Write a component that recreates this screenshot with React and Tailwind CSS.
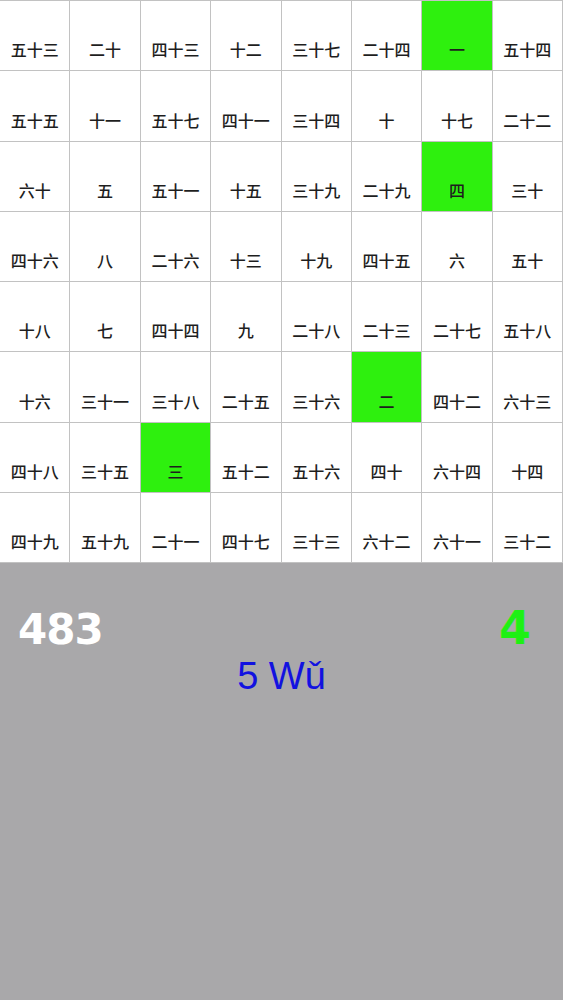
import React from 'react';

const rows = [
  ['五十三', '二十', '四十三', '十二', '三十七', '二十四', '一', '五十四'],
  ['五十五', '十一', '五十七', '四十一', '三十四', '十', '十七', '二十二'],
  ['六十', '五', '五十一', '十五', '三十九', '二十九', '四', '三十'],
  ['四十六', '八', '二十六', '十三', '十九', '四十五', '六', '五十'],
  ['十八', '七', '四十四', '九', '二十八', '二十三', '二十七', '五十八'],
  ['十六', '三十一', '三十八', '二十五', '三十六', '二', '四十二', '六十三'],
  ['四十八', '三十五', '三', '五十二', '五十六', '四十', '六十四', '十四'],
  ['四十九', '五十九', '二十一', '四十七', '三十三', '六十二', '六十一', '三十二'],
];

// cells already found
const found = ['一', '二', '三', '四'];

const Cell = ({ label }) => {
  const hit = found.includes(label);
  return (
    <div
      className={
        'flex items-end justify-center pb-[13px] border-r border-b border-[#c2c2c2] ' +
        (hit ? 'bg-[#2ef00e]' : 'bg-white')
      }
    >
      <span className="text-[16px] leading-none font-medium text-[#1e1e1e]">{label}</span>
    </div>
  );
};

export default function App() {
  return (
    <div
      className="w-[563px] h-[1000px] flex flex-col bg-[#a9a8aa]"
      style={{ fontFamily: '"Noto Sans CJK SC", "Noto Sans", sans-serif' }}
    >
      <div className="grid grid-cols-8 grid-rows-8 h-[563px] border-t border-[#c2c2c2] bg-white">
        {rows.flat().map((label, i) => (
          <Cell key={i} label={label} />
        ))}
      </div>

      <div className="flex flex-col px-[18px] pt-[42px]">
        <div
          className="flex justify-between items-end leading-none font-bold"
          style={{ fontFamily: '"DejaVu Sans", sans-serif' }}
        >
          <span className="text-white text-[42px] tracking-[-1px]">483</span>
          <span className="text-[#1ef014] text-[46px] pr-[14px]">4</span>
        </div>
        <div
          className="text-center text-[38px] leading-none text-[#1212e0] mt-[6px]"
          style={{ fontFamily: '"Liberation Sans", Arial, sans-serif' }}
        >
          5 Wǔ
        </div>
      </div>
    </div>
  );
}
